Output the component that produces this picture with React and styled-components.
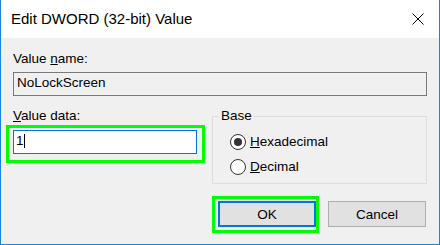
import React from "react";
import styled, { createGlobalStyle } from "styled-components";

const GlobalStyle = createGlobalStyle`
  html, body { margin: 0; padding: 0; background: #ffffff; }
  body { font-family: "Liberation Sans", Arial, sans-serif; color: #000; }
  * { box-sizing: border-box; }
`;

const Window = styled.div`
  width: 440px;
  height: 245px;
  display: flex;
  flex-direction: column;
  background: #f0f0f0;
  border: 1px solid #1883d7;
  border-top: none;
`;

const TitleBar = styled.div`
  height: 38px;
  flex: none;
  display: flex;
  align-items: center;
  justify-content: space-between;
  background: #ffffff;
  padding-left: 10px;
`;

const Title = styled.span`
  font-size: 15px;
  line-height: 38px;
`;

const CloseButton = styled.div`
  width: 42px;
  height: 38px;
  display: flex;
  align-items: center;
  justify-content: center;
`;

const Body = styled.div`
  display: flex;
  flex-direction: column;
  padding: 13px 12px 0 12px;
  font-size: 13.5px;
`;

const Label = styled.div`
  line-height: 16px;
  height: 16px;
`;

const TextBox = styled.div`
  position: relative;
  height: 24px;
  line-height: 20px;
  margin-top: ${(p) => p.$gap}px;
  width: ${(p) => (p.$width ? `${p.$width}px` : "auto")};
  border: 1px solid ${(p) => (p.$focused ? "#0078d7" : "#7a7a7a")};
  background: ${(p) => (p.$focused ? "#ffffff" : "#f0f0f0")};
  padding: 0 ${(p) => (p.$focused ? 2 : 3)}px;
  white-space: nowrap;
`;

const Caret = styled.span`
  display: inline-block;
  width: 1px;
  height: 14px;
  margin-top: 3px;
  vertical-align: top;
  background: #000;
`;

const Highlight = styled.div`
  position: absolute;
  top: ${(p) => p.$t}px;
  left: ${(p) => p.$l}px;
  right: ${(p) => p.$r}px;
  bottom: ${(p) => p.$b}px;
  border: 3px solid #00ff00;
  pointer-events: none;
`;

const Row = styled.div`
  display: grid;
  grid-template-columns: 184px 1fr;
  column-gap: 15px;
  margin-top: 12px;
`;

const Column = styled.div`
  display: flex;
  flex-direction: column;
`;

const GroupBox = styled.div`
  position: relative;
  margin-top: 8px;
  border: 1px solid #dcdcdc;
  padding: 12px 0 4px 17px;
`;

const GroupLabel = styled.span`
  position: absolute;
  top: -9px;
  left: 6px;
  padding: 0 2px;
  line-height: 16px;
  background: #f0f0f0;
`;

const RadioRow = styled.div`
  height: 25px;
  display: flex;
  align-items: center;
  gap: 4px;
`;

const RadioCircle = styled.span`
  position: relative;
  width: 16px;
  height: 16px;
  border-radius: 50%;
  border: 1px solid #333333;
  background: #ffffff;
  flex: none;
  &::after {
    content: "";
    display: ${(p) => (p.$checked ? "block" : "none")};
    position: absolute;
    left: 3px;
    top: 3px;
    width: 8px;
    height: 8px;
    border-radius: 50%;
    background: #333333;
  }
`;

const RadioText = styled.span`
  line-height: 16px;
`;

const ButtonRow = styled.div`
  display: flex;
  justify-content: flex-end;
  gap: 12px;
  margin-top: 17px;
  padding-right: 1px;
`;

const Button = styled.button`
  position: relative;
  width: 98px;
  height: 26px;
  padding: 0;
  font-family: inherit;
  font-size: 13.5px;
  color: #000;
  background: #e1e1e1;
  border: ${(p) => (p.$default ? "2px solid #0078d7" : "1px solid #adadad")};
`;

function CloseIcon() {
  return (
    <svg width="12" height="12" viewBox="0 0 12 12">
      <path d="M0.5 0.5 L11.5 11.5 M11.5 0.5 L0.5 11.5" stroke="#000" strokeWidth="1" fill="none" />
    </svg>
  );
}

export default function App() {
  return (
    <>
      <GlobalStyle />
      <Window>
        <TitleBar>
          <Title>Edit DWORD (32-bit) Value</Title>
          <CloseButton>
            <CloseIcon />
          </CloseButton>
        </TitleBar>
        <Body>
          <Label>
            Value <u>n</u>ame:
          </Label>
          <TextBox $gap={5}>NoLockScreen</TextBox>
          <Row>
            <Column>
              <Label>
                <u>V</u>alue data:
              </Label>
              <TextBox $gap={6} $width={184} $focused>
                1<Caret />
                <Highlight $t={-6} $l={-8} $r={-9} $b={-10} />
              </TextBox>
            </Column>
            <GroupBox>
              <GroupLabel>Base</GroupLabel>
              <RadioRow>
                <RadioCircle $checked />
                <RadioText>
                  <u>H</u>exadecimal
                </RadioText>
              </RadioRow>
              <RadioRow>
                <RadioCircle />
                <RadioText>
                  <u>D</u>ecimal
                </RadioText>
              </RadioRow>
            </GroupBox>
          </Row>
          <ButtonRow>
            <Button $default>
              OK
              <Highlight $t={-7} $l={-8} $r={-5} $b={-8} />
            </Button>
            <Button>Cancel</Button>
          </ButtonRow>
        </Body>
      </Window>
    </>
  );
}
